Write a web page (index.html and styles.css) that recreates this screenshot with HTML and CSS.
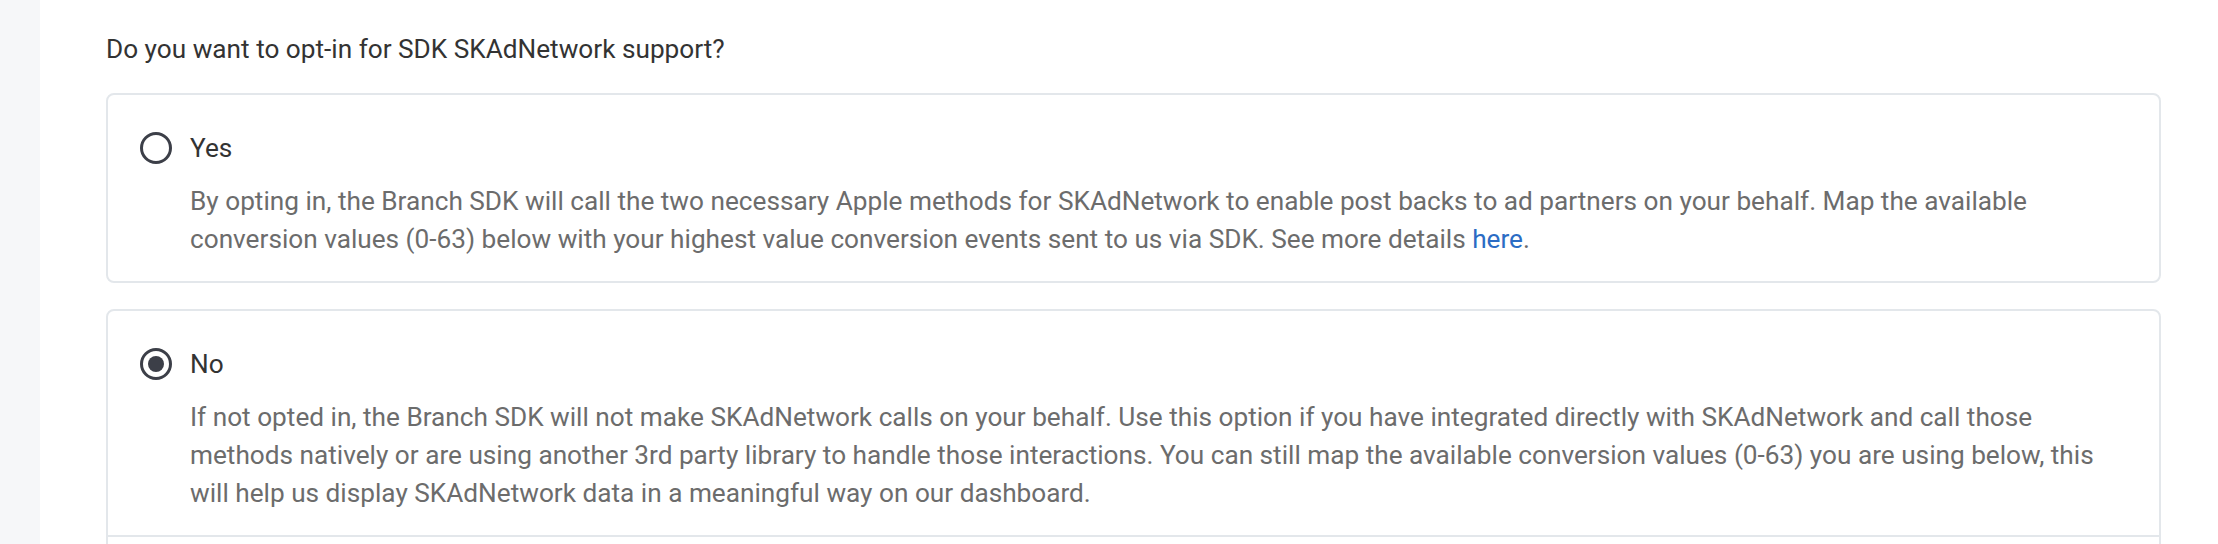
FILE: index.html
```html
<!DOCTYPE html>
<html>
<head>
<meta charset="utf-8">
<link rel="stylesheet" href="styles.css">
</head>
<body>
<div class="layout">
  <aside class="sidebar"></aside>
  <main class="content">
    <p class="question">Do you want to opt-in for SDK SKAdNetwork support?</p>
    <section class="card">
      <div class="card-body">
        <label class="option">
          <span class="radio"></span>
          <span class="option-label">Yes</span>
        </label>
        <p class="desc">By opting in, the Branch SDK will call the two necessary Apple methods for SKAdNetwork to enable post backs to ad partners on your behalf. Map the available conversion values (0-63) below with your highest value conversion events sent to us via SDK. See more details <a class="link" href="#">here</a>.</p>
      </div>
    </section>
    <section class="card">
      <div class="card-body">
        <label class="option">
          <span class="radio radio-checked"></span>
          <span class="option-label">No</span>
        </label>
        <p class="desc">If not opted in, the Branch SDK will not make SKAdNetwork calls on your behalf. Use this option if you have integrated directly with SKAdNetwork and call those methods natively or are using another 3rd party library to handle those interactions. You can still map the available conversion values (0-63) you are using below, this will help us display SKAdNetwork data in a meaningful way on our dashboard.</p>
      </div>
      <div class="card-section"></div>
    </section>
  </main>
</div>
</body>
</html>
```
FILE: styles.css
```css
html, body {
  margin: 0;
  padding: 0;
  background: #ffffff;
  overflow: hidden;
}
body {
  font-family: Roboto, "Liberation Sans", sans-serif;
  font-size: 26.2px;
  color: #333333;
}
.layout {
  display: flex;
  min-height: 544px;
}
.sidebar {
  width: 40px;
  flex: 0 0 40px;
  background: #f6f7f9;
}
.content {
  flex: 1;
  padding: 30px 57px 0 66px;
}
.question {
  margin: 0 0 25px 0;
  line-height: 38px;
  color: #333333;
}
.card {
  border: 2px solid #e3e7eb;
  border-radius: 8px;
  margin-bottom: 26px;
  background: #ffffff;
}
.card-body {
  padding: 37px 46px 23px 32px;
}
.option {
  display: flex;
  align-items: center;
  gap: 18px;
  height: 32px;
}
.radio {
  box-sizing: border-box;
  width: 32px;
  height: 32px;
  border: 3px solid #3c3f48;
  border-radius: 50%;
  display: flex;
  align-items: center;
  justify-content: center;
  flex: 0 0 32px;
}
.radio-checked::after {
  content: "";
  width: 16px;
  height: 16px;
  border-radius: 50%;
  background: #3c3f48;
}
.option-label {
  line-height: 32px;
  color: #333333;
}
.desc {
  margin: 18px 0 0 50px;
  line-height: 38px;
  color: #6c6c6c;
}
.link {
  color: #2b6cc4;
  text-decoration: none;
}
.card-section {
  border-top: 2px solid #e3e7eb;
  height: 200px;
}
```
